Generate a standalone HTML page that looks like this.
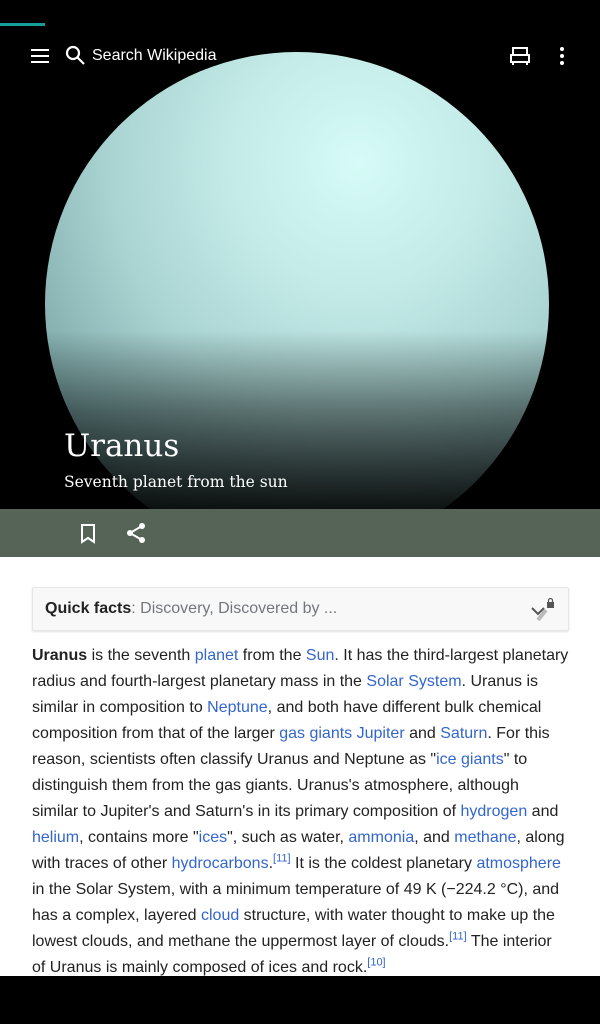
<!DOCTYPE html>
<html><head><meta charset="utf-8"><style>
body{margin:0;width:600px;height:1024px;overflow:hidden;background:#fff;font-family:"Liberation Sans",sans-serif;position:relative}
.hero{position:absolute;left:0;top:0;width:600px;height:509px;background:#000;overflow:hidden}
.planet{position:absolute;left:45px;top:52px;width:504px;height:504px;border-radius:50%;
background:radial-gradient(circle at 62% 22%,#d6fbf8 0%,#c4ebe8 25%,#a9d3d1 50%,#84aeae 72%,#5d8284 90%,#4a6b6d 100%)}
.fade{position:absolute;left:0;top:330px;width:600px;height:179px;background:linear-gradient(to bottom,rgba(0,0,0,0),rgba(0,0,0,.45) 45%,rgba(0,0,0,.9))}
.prog{position:absolute;left:0;top:23px;width:45px;height:3px;background:#14a098}
.top{position:absolute;top:40px;left:0;width:600px;height:32px;color:#fff}
.title{position:absolute;left:64px;top:428px;color:#fff;font-family:"DejaVu Serif","Liberation Serif",serif;font-size:31px}
.sub{position:absolute;left:64px;top:473px;color:#fff;font-family:"DejaVu Serif","Liberation Serif",serif;font-size:15.5px}
.bar{position:absolute;left:0;top:509px;width:600px;height:48px;background:#566457}
.qf{position:absolute;left:32px;top:587px;width:535px;height:42px;background:#f8f8f8;border:1px solid #e6e6e6;border-radius:2px;box-shadow:0 1px 2px rgba(0,0,0,.12);font-size:16px;line-height:42px;color:#72777d}
.qf b{color:#222;margin-left:12px}
.txt{position:absolute;left:32px;top:643px;width:560px;font-size:16px;line-height:26px;color:#222;white-space:nowrap}
a{color:#3366cc;text-decoration:none}
sup{font-size:11px;line-height:0}
.nav{position:absolute;left:0;top:976px;width:600px;height:48px;background:#000}
</style></head><body>
<div class="hero"><div class="planet"></div><div class="fade"></div><div class="prog"></div>
<div class="top">
<svg style="position:absolute;left:30px;top:6px" width="20" height="20" viewBox="0 0 20 20" fill="#fff"><rect x="1" y="3" width="18" height="2"/><rect x="1" y="9" width="18" height="2"/><rect x="1" y="15" width="18" height="2"/></svg>
<svg style="position:absolute;left:65px;top:5px" width="22" height="22" viewBox="0 0 22 22" fill="none" stroke="#fff" stroke-width="2.2"><circle cx="8" cy="8" r="6"/><path d="M12.5 12.5L19 19"/></svg>
<span style="position:absolute;left:92px;top:7px;font-size:16px">Search Wikipedia</span>
<svg style="position:absolute;left:509px;top:6px" width="22" height="20" viewBox="0 0 22 20" fill="none" stroke="#fff" stroke-width="2"><path d="M4 9V2h14v7M2 9h18v7H2z M4 16v3M18 16v3"/></svg>
<svg style="position:absolute;left:558px;top:6px" width="8" height="20" viewBox="0 0 8 20" fill="#fff"><circle cx="4" cy="3" r="2"/><circle cx="4" cy="10" r="2"/><circle cx="4" cy="17" r="2"/></svg>
</div>
<div class="title">Uranus</div><div class="sub">Seventh planet from the sun</div>
</div>
<div class="bar">
<svg style="position:absolute;left:80px;top:15px" width="16" height="20" viewBox="0 0 16 20" fill="none" stroke="#fff" stroke-width="2"><path d="M2 1h12v17l-6-4-6 4z"/></svg>
<svg style="position:absolute;left:126px;top:13px" width="20" height="22" viewBox="0 0 20 22" fill="#fff"><circle cx="16" cy="4" r="3"/><circle cx="4" cy="11" r="3"/><circle cx="16" cy="18" r="3"/><path d="M4 11L16 4M4 11L16 18" stroke="#fff" stroke-width="2"/></svg>
</div>
<div class="qf"><b>Quick facts</b>: Discovery, Discovered by ...
<svg style="position:absolute;right:12px;top:10px" width="26" height="24" viewBox="0 0 26 24"><path d="M2 10l6 6 6-6" fill="none" stroke="#555" stroke-width="2"/><path d="M8 22l8-10" stroke="#bbb" stroke-width="4"/><rect x="17" y="4" width="7" height="6" fill="#555"/><path d="M18.5 4V2.5a2 2 0 0 1 4 0V4" fill="none" stroke="#555" stroke-width="1.2"/></svg></div>
<div class="txt"><b>Uranus</b> is the seventh <a>planet</a> from the <a>Sun</a>. It has the third-largest planetary<br>radius and fourth-largest planetary mass in the <a>Solar System</a>. Uranus is<br>similar in composition to <a>Neptune</a>, and both have different bulk chemical<br>composition from that of the larger <a>gas giants</a> <a>Jupiter</a> and <a>Saturn</a>. For this<br>reason, scientists often classify Uranus and Neptune as "<a>ice giants</a>" to<br>distinguish them from the gas giants. Uranus's atmosphere, although<br>similar to Jupiter's and Saturn's in its primary composition of <a>hydrogen</a> and<br><a>helium</a>, contains more "<a>ices</a>", such as water, <a>ammonia</a>, and <a>methane</a>, along<br>with traces of other <a>hydrocarbons</a>.<sup><a>[11]</a></sup> It is the coldest planetary <a>atmosphere</a><br>in the Solar System, with a minimum temperature of 49 K (−224.2 °C), and<br>has a complex, layered <a>cloud</a> structure, with water thought to make up the<br>lowest clouds, and methane the uppermost layer of clouds.<sup><a>[11]</a></sup> The interior<br>of Uranus is mainly composed of ices and rock.<sup><a>[10]</a></sup></div>
<div class="nav"></div>
</body></html>
